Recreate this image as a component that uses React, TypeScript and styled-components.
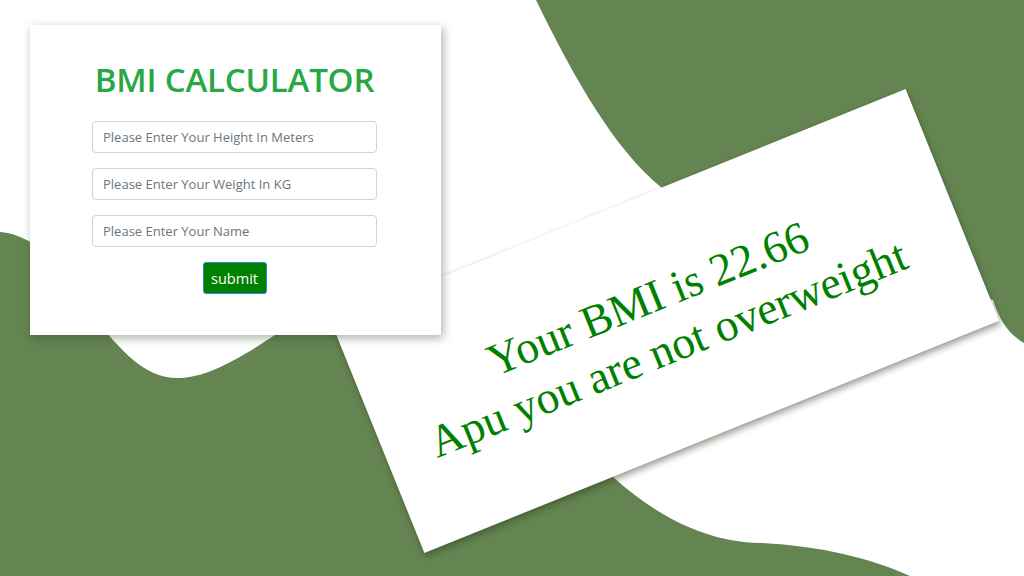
import React from "react";
import styled, { createGlobalStyle } from "styled-components";

const GlobalStyle = createGlobalStyle`
  html, body, #root {
    margin: 0;
    padding: 0;
    width: 100%;
    height: 100%;
  }
  body {
    font-family: "Open Sans", "Liberation Sans", sans-serif;
    background: #ffffff;
    overflow: hidden;
  }
  * { box-sizing: border-box; }
`;

const Page = styled.main`
  position: relative;
  width: 1024px;
  height: 576px;
  overflow: hidden;
  background: #ffffff;
`;

const Backdrop = styled.svg`
  position: absolute;
  inset: 0;
  width: 100%;
  height: 100%;
  z-index: 0;
`;

const Stage = styled.div`
  position: relative;
  z-index: 1;
  display: grid;
  grid-template-columns: 325px 86px 534px;
  grid-template-rows: 171px 139px 111px;
  padding: 25px 0 0 30px;
`;

const FormCard = styled.section`
  position: relative;
  z-index: 2;
  grid-column: 1 / 3;
  grid-row: 1 / 3;
  background: #ffffff;
  box-shadow: 2px 3px 9px rgba(40, 60, 30, 0.4);
  display: flex;
  flex-direction: column;
  align-items: center;
  padding: 35px 2px 0 0;
`;

const Title = styled.h1`
  margin: 0 0 21px;
  font-family: "Open Sans", "Liberation Sans", sans-serif;
  font-size: 33px;
  line-height: 40px;
  font-weight: 600;
  color: #28a745;
  letter-spacing: -0.2px;
`;

const Fields = styled.form`
  width: 285px;
  display: flex;
  flex-direction: column;
  align-items: center;
  gap: 15px;
`;

const Field = styled.input`
  width: 100%;
  height: 32px;
  padding: 0 10px;
  border: 1px solid #ced4da;
  border-radius: 4px;
  background: #ffffff;
  font-family: "Open Sans", "Liberation Sans", sans-serif;
  font-size: 13px;
  color: #495057;
  outline: none;
  &::placeholder {
    color: #6c757d;
    opacity: 1;
  }
`;

const Submit = styled.button`
  height: 32px;
  width: 64px;
  padding: 0;
  border: 1px solid #2f86e0;
  border-radius: 3px;
  background: #008000;
  color: #ffffff;
  font-family: "Open Sans", "Liberation Sans", sans-serif;
  font-size: 14.5px;
  cursor: pointer;
`;

const ResultCard = styled.section`
  grid-column: 2 / 4;
  grid-row: 2 / 4;
  background: #ffffff;
  transform: rotate(-22deg);
  box-shadow: 0 0 2px rgba(0, 0, 0, 0.15), 0 4px 6px rgba(40, 60, 30, 0.45);
  display: flex;
  flex-direction: column;
  align-items: center;
  justify-content: center;
  padding-right: 15px;
`;

const ResultLine = styled.p`
  margin: 0;
  font-family: "Liberation Serif", "Times New Roman", serif;
  font-size: 45.5px;
  line-height: 54px;
  color: #008000;
  white-space: nowrap;
`;

export default function App() {
  return (
    <>
      <GlobalStyle />
      <Page>
        <Backdrop viewBox="0 0 1024 576" preserveAspectRatio="none" aria-hidden="true">
          <path
            fill="#648551"
            d="M536,0 C575,80 615,150 662,188 L993,300 C1000,322 1010,335 1024,343 L1024,0 Z"
          />
          <path
            fill="#648551"
            d="M0,232 C12,233 22,237 32,243 L95,318 C120,350 145,378 177,378 C210,378 245,355 290,325 L400,320 L520,460 L613,477 C655,515 705,542 760,543 C820,546 870,558 910,576 L0,576 Z"
          />
        </Backdrop>
        <Stage>
          <FormCard>
            <Title>BMI CALCULATOR</Title>
            <Fields onSubmit={(e) => e.preventDefault()}>
              <Field type="text" placeholder="Please Enter Your Height In Meters" />
              <Field type="text" placeholder="Please Enter Your Weight In KG" />
              <Field type="text" placeholder="Please Enter Your Name" />
              <Submit type="submit">submit</Submit>
            </Fields>
          </FormCard>
          <ResultCard>
            <ResultLine>Your BMI is 22.66</ResultLine>
            <ResultLine>Apu you are not overweight</ResultLine>
          </ResultCard>
        </Stage>
      </Page>
    </>
  );
}
